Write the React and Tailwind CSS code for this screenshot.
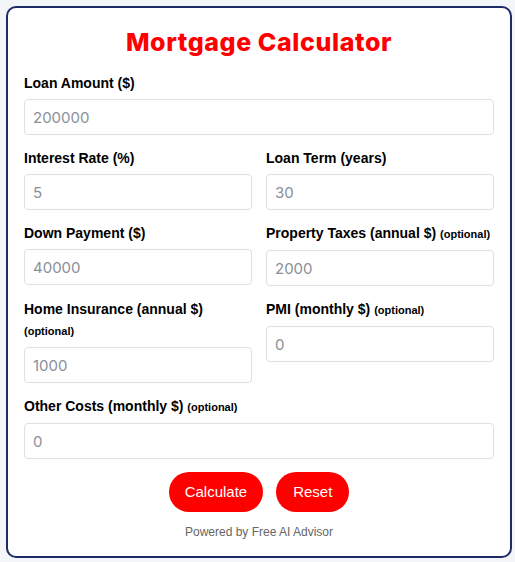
import { useState } from 'react';

const fields = [
  { id: 'loan', label: 'Loan Amount ($)', ph: '200000', full: true },
  { id: 'rate', label: 'Interest Rate (%)', ph: '5' },
  { id: 'term', label: 'Loan Term (years)', ph: '30' },
  { id: 'down', label: 'Down Payment ($)', ph: '40000' },
  { id: 'tax', label: 'Property Taxes (annual $)', ph: '2000', optional: true },
  { id: 'ins', label: 'Home Insurance (annual $)', ph: '1000', optional: true },
  { id: 'pmi', label: 'PMI (monthly $)', ph: '0', optional: true },
  { id: 'other', label: 'Other Costs (monthly $)', ph: '0', optional: true, full: true },
];

function Field({ f, value, onChange }) {
  return (
    <div className={f.full ? 'col-span-2' : ''}>
      <label htmlFor={f.id} className="block mb-[5px] text-[14px] leading-[21px] font-bold text-black">
        {f.label}
        {f.optional && <> <span className="text-[11px]">(optional)</span></>}
      </label>
      <input
        id={f.id}
        type="number"
        value={value}
        onChange={e => onChange(f.id, e.target.value)}
        placeholder={f.ph}
        className="w-full h-[36px] px-[8px] border border-[#dde1e7] rounded-[4px] bg-white text-[15px] font-['Inter',sans-serif] text-gray-800 placeholder:text-[#8a8f98] outline-none"
      />
    </div>
  );
}

export default function App() {
  const [vals, setVals] = useState({});
  const update = (id, v) => setVals(s => ({ ...s, [id]: v }));

  return (
    <div className="min-h-screen bg-[#f3f5f9] pt-[6px] px-[6px] font-['Liberation_Sans',Arial,sans-serif]">
      <div className="w-[506px] h-[552px] bg-white border-2 border-[#1c2a66] rounded-[10px] px-[16px] pt-[19px]">
        <h1 className="text-center text-[25px] leading-[30px] font-extrabold text-[#ff0000] font-['Inter',sans-serif] tracking-[0.6px] mb-[16px]">
          Mortgage Calculator
        </h1>
        <div className="grid grid-cols-2 gap-x-[14px] gap-y-[13px] items-start">
          {fields.map(f => (
            <Field key={f.id} f={f} value={vals[f.id] || ''} onChange={update} />
          ))}
        </div>
        <div className="flex justify-center gap-[13px] mt-[13px]">
          <button onClick={() => {}} className="h-[40px] px-[16px] rounded-full bg-[#ff0000] text-white text-[15px]">
            Calculate
          </button>
          <button onClick={() => setVals({})} className="h-[40px] px-[17px] rounded-full bg-[#ff0000] text-white text-[15px]">
            Reset
          </button>
        </div>
        <p className="text-center text-[12px] text-[#666] mt-[11px]">Powered by Free AI Advisor</p>
      </div>
    </div>
  );
}
